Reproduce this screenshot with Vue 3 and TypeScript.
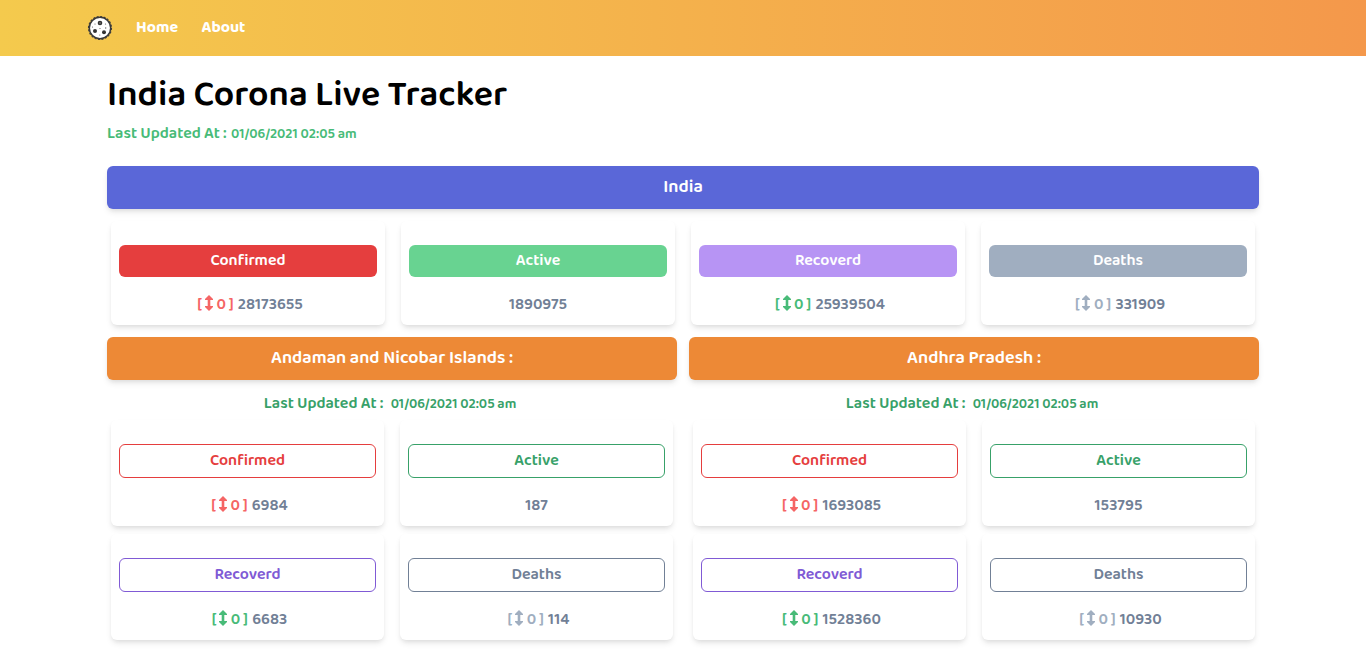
<script setup lang="ts">
interface Stat { kind: string; label: string; value: string; delta: boolean }
interface Region { name: string; cls: string; stats: Stat[] }

const makeStats = (confirmed: string, active: string, recovered: string, deaths: string): Stat[] => [
  { kind: 'confirmed', label: 'Confirmed', value: confirmed, delta: true },
  { kind: 'active', label: 'Active', value: active, delta: false },
  { kind: 'recovered', label: 'Recoverd', value: recovered, delta: true },
  { kind: 'deaths', label: 'Deaths', value: deaths, delta: true },
]

const updated = '01/06/2021 02:05 am'
const country = makeStats('28173655', '1890975', '25939504', '331909')
const regions: Region[] = [
  { name: 'Andaman and Nicobar Islands :', cls: 'andaman', stats: makeStats('6984', '187', '6683', '114') },
  { name: 'Andhra Pradesh :', cls: 'andhra', stats: makeStats('1693085', '153795', '1528360', '10930') },
]
</script>

<template>
  <div class="page">
    <nav class="navbar">
      <svg class="logo" viewBox="0 0 24 24">
        <circle cx="12" cy="12" r="10.7" fill="#fff" stroke="#3a3a3a" stroke-width="1.5" />
        <circle cx="12" cy="12" r="11.5" fill="none" stroke="#3a3a3a" stroke-width="1.1" stroke-dasharray="2 1.6" />
        <g fill="#333">
          <circle cx="12" cy="7" r="2.3" /><circle cx="7" cy="15" r="2" /><circle cx="16" cy="16.3" r="2" />
        </g>
        <g fill="#666">
          <circle cx="7" cy="8" r=".6" /><circle cx="17.5" cy="8" r=".6" /><circle cx="12" cy="12.5" r=".6" />
          <circle cx="17.7" cy="12" r=".7" /><circle cx="4.5" cy="11" r=".6" /><circle cx="11.8" cy="19" r=".6" />
          <circle cx="12" cy="7" r="1" />
        </g>
      </svg>
      <a class="home">Home</a>
      <a class="about">About</a>
    </nav>
    <main class="content">
      <h1>India Corona Live Tracker</h1>
      <p class="updated"><span class="caption">Last Updated At :</span><span class="date">{{ updated }}</span></p>
      <h2 class="banner country"><span>India</span></h2>
      <section class="cards four">
        <article v-for="s in country" :key="s.kind" class="card" :class="s.kind">
          <h3 class="label filled"><span>{{ s.label }}</span></h3>
          <p class="value">
            <span v-if="s.delta" class="delta"><span>[</span><svg class="arrow" viewBox="0 0 8 16"><path d="M4 0L8 4V5H5.3V11H8V12L4 16L0 12V11H2.7V5H0V4Z" /></svg><span class="zero">0</span><span>]</span></span><span class="number">{{ s.value }}</span>
          </p>
        </article>
      </section>
      <div class="regions">
        <section v-for="r in regions" :key="r.name">
          <h2 class="banner state" :class="r.cls"><span>{{ r.name }}</span></h2>
          <p class="updated centered"><span class="caption">Last Updated At :</span><span class="date">{{ updated }}</span></p>
          <div class="cards two">
            <article v-for="s in r.stats" :key="s.kind" class="card" :class="s.kind">
              <h3 class="label outlined"><span>{{ s.label }}</span></h3>
              <p class="value">
                <span v-if="s.delta" class="delta"><span>[</span><svg class="arrow" viewBox="0 0 8 16"><path d="M4 0L8 4V5H5.3V11H8V12L4 16L0 12V11H2.7V5H0V4Z" /></svg><span class="zero">0</span><span>]</span></span><span class="number">{{ s.value }}</span>
              </p>
            </article>
          </div>
        </section>
      </div>
    </main>
  </div>
</template>

<style>
body { margin: 0; background: #fff; overflow: hidden; }
</style>

<style scoped>
.page { height: 663px; overflow: hidden; font-family: "Baloo 2", "Noto Sans", sans-serif; font-size: 16px; color: #000; }
h1, h2, h3, p { margin: 0; }
.navbar { box-sizing: border-box; height: 56px; padding: 0 88px; display: flex; align-items: center; background: linear-gradient(to right, #f4ca4d, #f4984b); color: #fff; font-weight: 700; line-height: 24px; }
.logo { width: 24px; height: 24px; margin-right: 24px; overflow: visible; }
.navbar a { white-space: nowrap; }
.home { width: 65.5px; }
.content { width: 1152px; margin: 0 auto; }
h1 { height: 54px; margin-top: 12px; line-height: 54px; font-size: 36px; font-weight: 600; letter-spacing: .03px; white-space: nowrap; }
.updated { display: flex; align-items: baseline; height: 24px; line-height: 24px; color: #48bb78; white-space: nowrap; }
.caption { width: 124px; font-weight: 600; }
.date { font-size: 14px; font-weight: 600; }
.banner { height: 43px; border-radius: 6px; display: flex; align-items: center; justify-content: center; color: #fff; font-size: 18px; font-weight: 600; line-height: 40px; box-shadow: 0 4px 6px -1px rgba(0,0,0,.1), 0 2px 4px -1px rgba(0,0,0,.06); }
.banner span { padding-bottom: 2px; white-space: nowrap; }
.country { margin-top: 20px; background: #5a67d8; }
.cards { display: grid; padding: 0 4px; column-gap: 16px; row-gap: 8px; }
.four { grid-template-columns: repeat(4, 1fr); margin-top: 12px; }
.two { grid-template-columns: repeat(2, 1fr); margin-top: 4px; }
.card { padding: 24px 8px 8px; border-radius: 6px; background: #fff; box-shadow: 0 4px 6px -1px rgba(0,0,0,.1), 0 2px 4px -1px rgba(0,0,0,.06); }
.label { box-sizing: border-box; display: flex; justify-content: center; border-radius: 6px; font-size: 16px; font-weight: 600; line-height: 32px; }
.filled { height: 32px; color: #fff; }
.outlined { height: 34px; border: 1px solid; }
.value { display: flex; justify-content: center; align-items: center; height: 24px; margin-top: 16px; line-height: 24px; font-weight: 600; color: #718096; }
.delta { display: flex; align-items: center; width: 40.5px; margin-left: 4px; white-space: nowrap; }
.arrow { flex: none; width: 8px; height: 16px; margin: 0 3.5px 4px 3px; fill: currentColor; }
.zero { margin-right: 3px; }
.confirmed .delta { color: #f56565; }
.recovered .delta { color: #48bb78; }
.deaths .delta { color: #a0aec0; }
.confirmed .filled { background: #e53e3e; }
.active .filled { background: #68d391; }
.recovered .filled { background: #b794f4; }
.deaths .filled { background: #a0aec0; }
.confirmed .outlined { color: #e53e3e; }
.active .outlined { color: #38a169; }
.recovered .outlined { color: #805ad5; }
.deaths .outlined { color: #718096; }
.regions { display: grid; grid-template-columns: 1fr 1fr; column-gap: 12px; margin-top: 12px; }
.state { background: #ed8936; }
.centered { justify-content: center; margin-top: 12px; padding-right: 4px; color: #38a169; }
.centered .caption { width: 127px; }
.two .card { height: 74px; }
</style>
